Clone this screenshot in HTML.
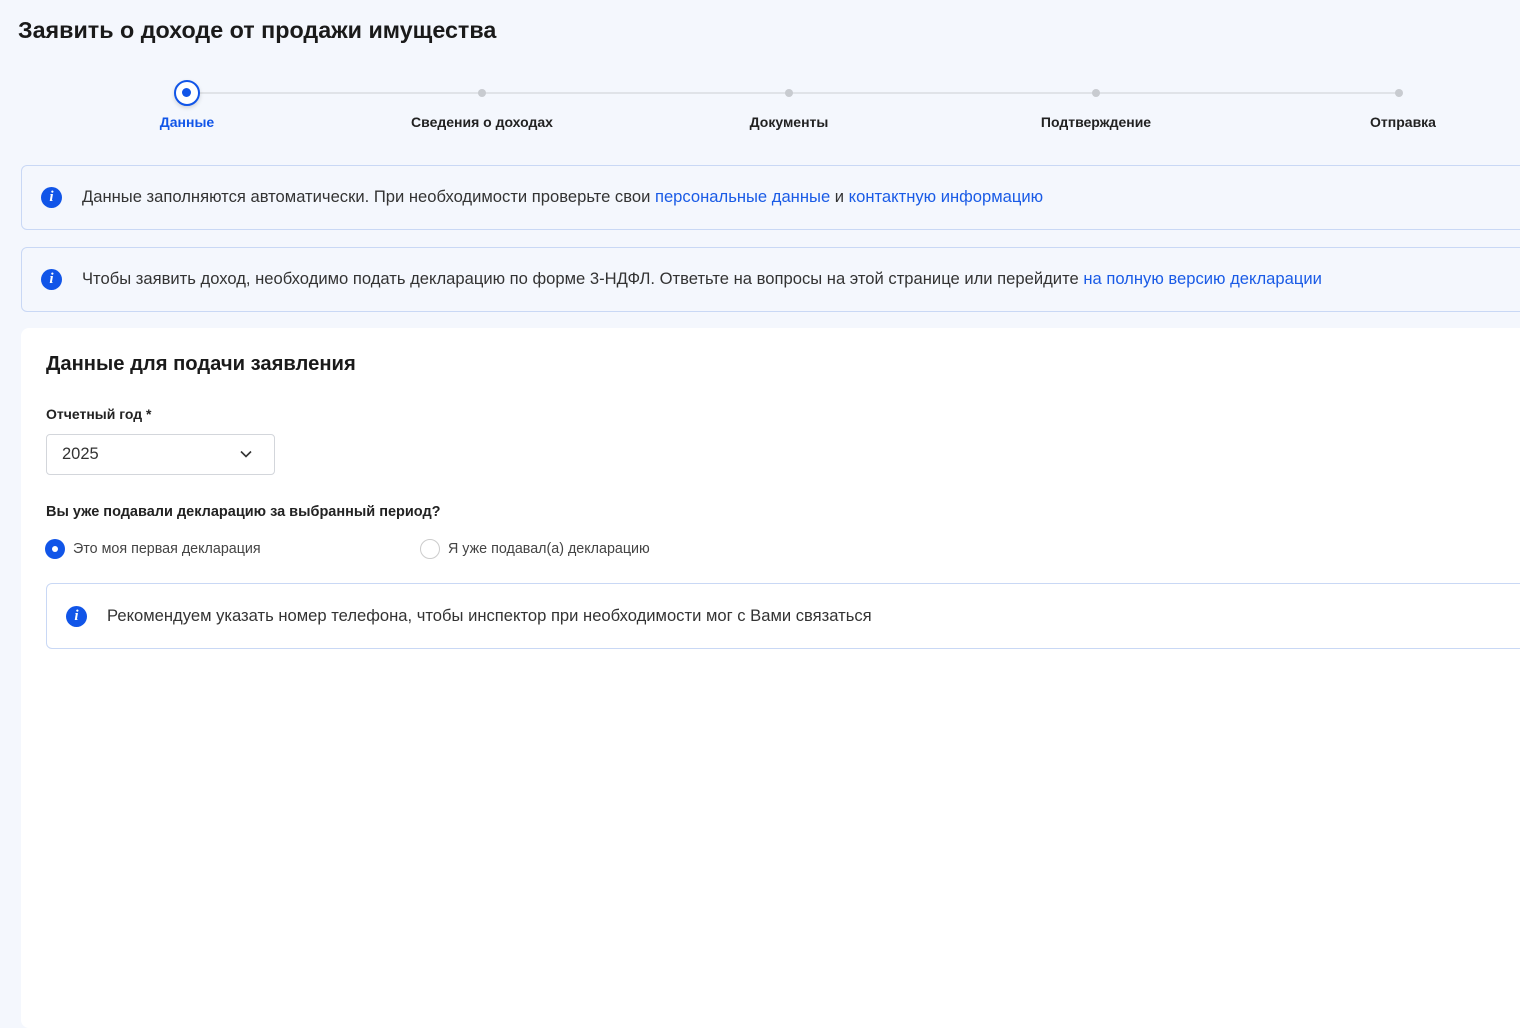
<!DOCTYPE html>
<html><head><meta charset="utf-8"><style>
*{box-sizing:border-box;margin:0;padding:0}
body{width:1520px;height:998px;overflow:hidden;background:#f4f7fd;font-family:"Liberation Sans",sans-serif;color:#222;position:relative}
.abs{position:absolute;white-space:nowrap}
h1{position:absolute;left:18px;top:17px;font-size:23.3px;font-weight:bold;color:#1a1a1a}
.line{position:absolute;top:92px;height:2px;background:#e0e3e8;left:187px;width:1212px}
.dot{position:absolute;top:89px;width:8px;height:8px;border-radius:50%;background:#c8cbd0}
.step{position:absolute;top:114px;font-size:14px;font-weight:bold;color:#222;transform:translateX(-50%)}
.info{position:absolute;left:21px;width:1520px;height:65px;border:1px solid #c9d8f5;border-radius:6px;background:#f4f7fd;font-size:16.6px;color:#333}
.info .t{position:absolute;left:60px;top:21px;white-space:nowrap}
.ic{position:absolute;left:19px;top:21px;width:21px;height:21px;border-radius:50%;background:#1155e8;color:#fff;font:italic bold 15px "Liberation Serif",serif;text-align:center;line-height:21px}
a{color:#1a5be6;text-decoration:none}
.card{position:absolute;left:21px;top:328px;width:1520px;height:700px;background:#fff;border-radius:8px}
</style></head><body>
<h1>Заявить о доходе от продажи имущества</h1>
<div class="line"></div>
<div class="abs" style="left:174px;top:80px;width:26px;height:26px;border-radius:50%;border:2.5px solid #1155e8;background:#fff;box-shadow:0 2px 4px rgba(0,0,0,.15)"><div style="position:absolute;left:6px;top:6px;width:9px;height:9px;border-radius:50%;background:#1155e8"></div></div>
<div class="dot" style="left:478px"></div>
<div class="dot" style="left:785px"></div>
<div class="dot" style="left:1092px"></div>
<div class="dot" style="left:1395px"></div>
<div class="step" style="left:187px;color:#1155e8">Данные</div>
<div class="step" style="left:482px">Сведения о доходах</div>
<div class="step" style="left:789px">Документы</div>
<div class="step" style="left:1096px">Подтверждение</div>
<div class="step" style="left:1403px">Отправка</div>

<div class="info" style="top:165px"><div class="ic">i</div><div class="t">Данные заполняются автоматически. При необходимости проверьте свои <a>персональные данные</a> и <a>контактную информацию</a></div></div>
<div class="info" style="top:247px"><div class="ic">i</div><div class="t">Чтобы заявить доход, необходимо подать декларацию по форме 3-НДФЛ. Ответьте на вопросы на этой странице или перейдите <a>на полную версию декларации</a></div></div>

<div class="card">
<div class="abs" style="left:25px;top:25px;font-size:20.2px;font-weight:bold;color:#1a1a1a">Данные для подачи заявления</div>
<div class="abs" style="left:25px;top:78px;font-size:14px;font-weight:bold">Отчетный год *</div>
<div class="abs" style="left:25px;top:106px;width:229px;height:41px;border:1px solid #d3d6db;border-radius:4px;font-size:16.5px;color:#333;padding:10px 0 0 15px">2025
<svg style="position:absolute;right:22px;top:15px" width="12" height="8" viewBox="0 0 12 8"><path d="M1 1.5l5 5 5-5" fill="none" stroke="#333" stroke-width="1.6"/></svg></div>
<div class="abs" style="left:25px;top:176px;font-size:14.5px;font-weight:bold">Вы уже подавали декларацию за выбранный период?</div>
<div class="abs" style="left:24px;top:211px;width:20px;height:20px;border-radius:50%;background:#1155e8"><div style="position:absolute;left:7px;top:7px;width:6px;height:6px;border-radius:50%;background:#fff"></div></div>
<div class="abs" style="left:52px;top:213px;font-size:14.3px;color:#444">Это моя первая декларация</div>
<div class="abs" style="left:399px;top:211px;width:20px;height:20px;border-radius:50%;border:1.5px solid #ccc"></div>
<div class="abs" style="left:427px;top:213px;font-size:14.3px;color:#444">Я уже подавал(а) декларацию</div>
<div class="info" style="left:25px;top:255px;height:66px;background:#fff"><div class="ic" style="top:22px">i</div><div class="t" style="top:22px">Рекомендуем указать номер телефона, чтобы инспектор при необходимости мог с Вами связаться</div></div>
</div>
</body></html>
